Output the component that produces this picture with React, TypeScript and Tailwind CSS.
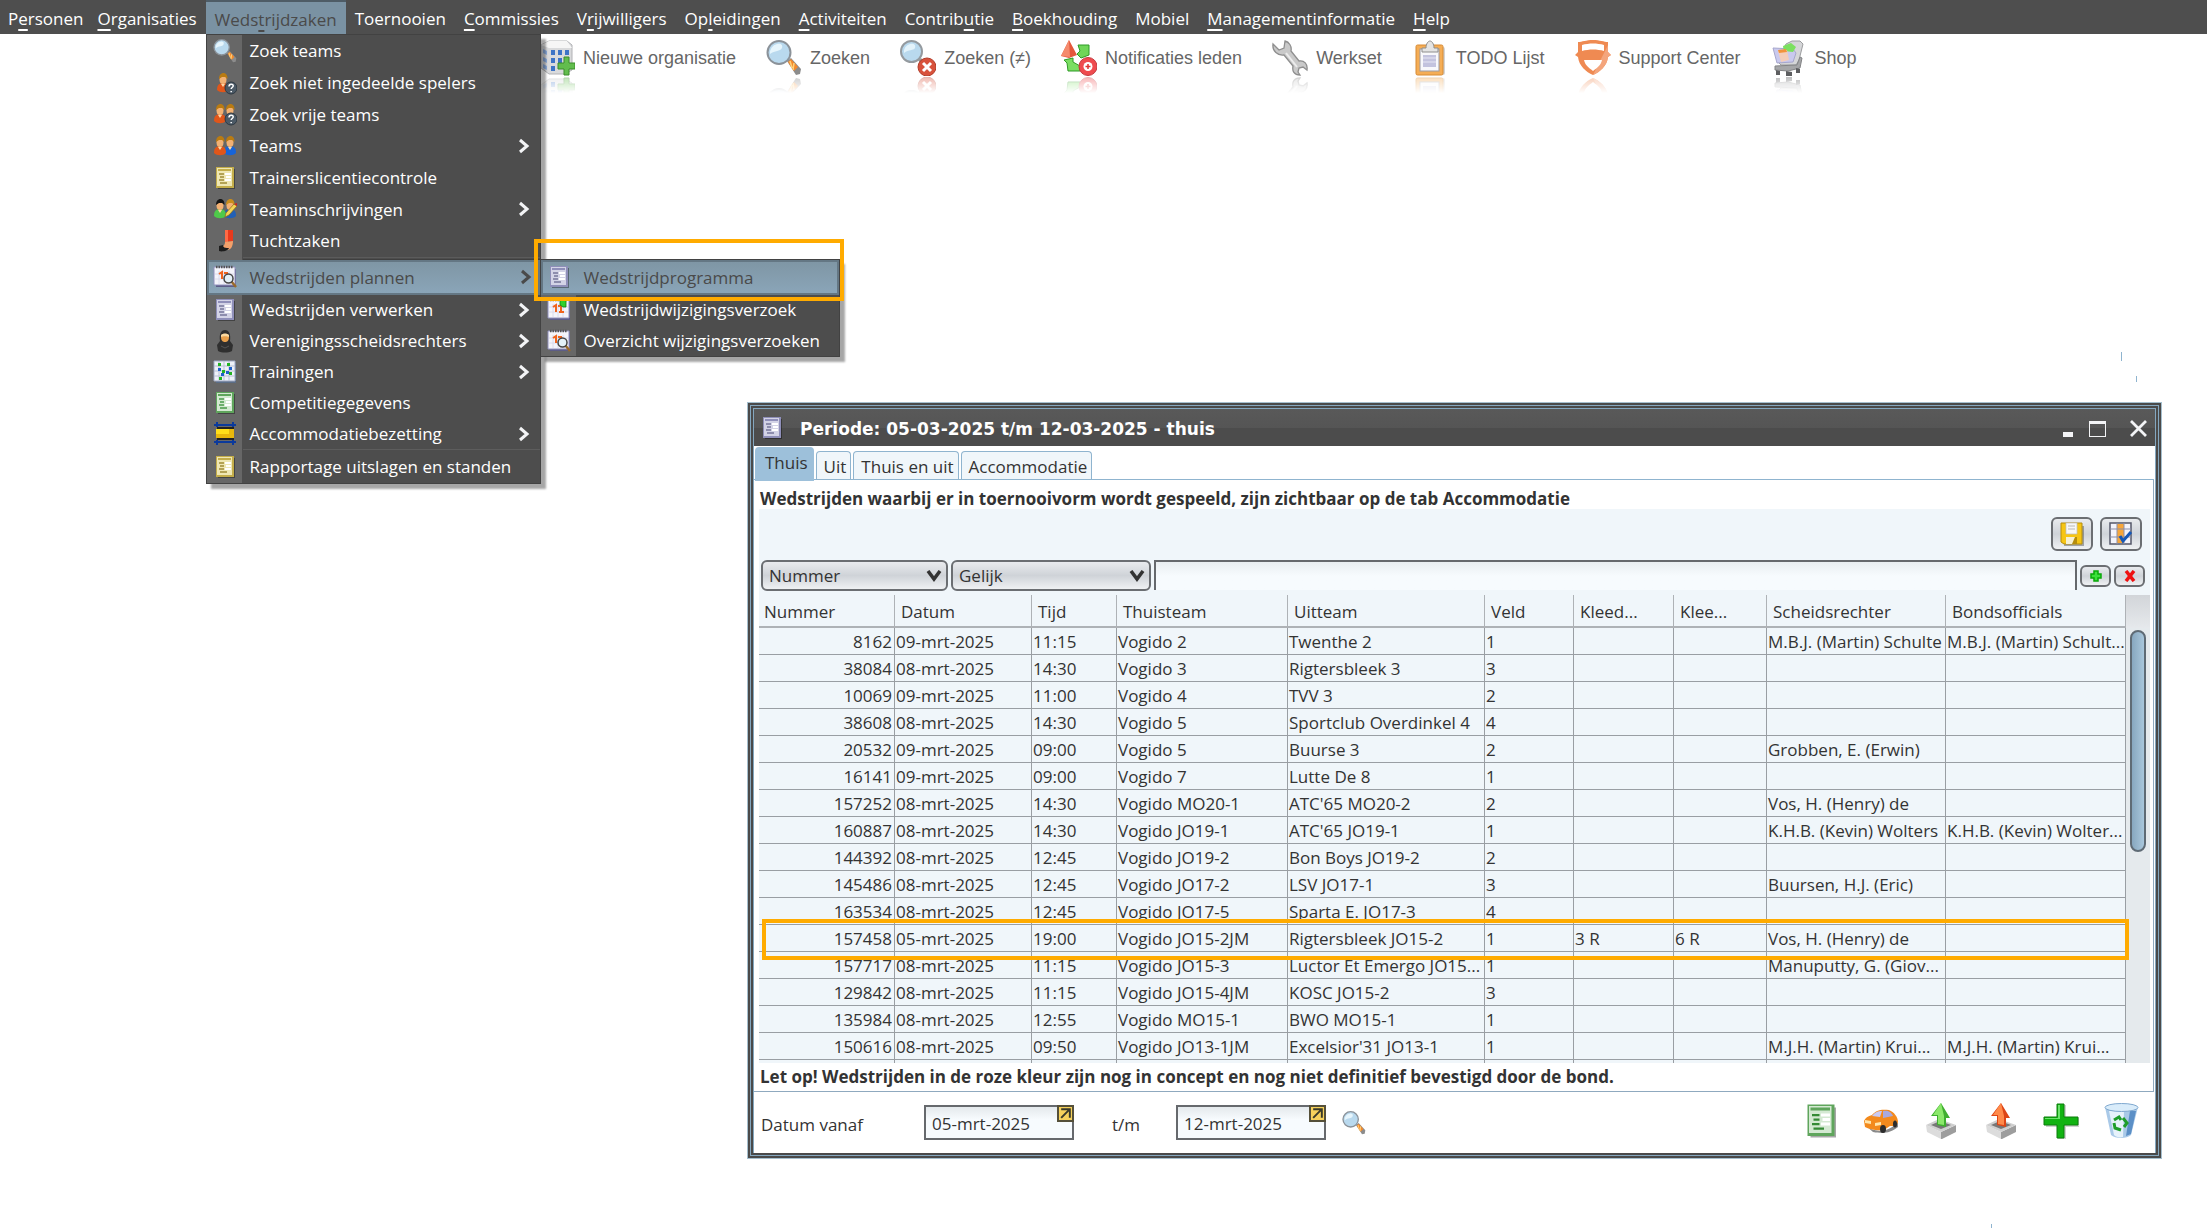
import { FC, ReactNode } from "react";

interface IconProps {
  className?: string;
}

interface MenuEntry {
  label: string;
  icon: ReactNode;
  sub?: boolean;
  active?: boolean;
}

/* ---------- icons ---------- */

const Magnifier: FC<IconProps> = ({ className = "size-6" }) => (
  <svg viewBox="0 0 36 36" className={className} aria-hidden="true">
    <path d="M21 21l4-3 10 11-1 5-4 1z" fill="#8c8c8c" />
    <path d="M22 22l3-3 7 8-4 4z" fill="#f58a2c" />
    <path d="M24 21l2 7M28 23l-1 7" stroke="#ffd27a" strokeWidth="1.5" />
    <ellipse cx="13" cy="12.500" rx="11.500" ry="11.500" fill="#b9d9ee" stroke="#8b9299" strokeWidth="2" />
    <path d="M4 14a9 9 0 0 1 7-10c4-1 6 1 5 4-2 4-7 2-12 6z" fill="#e6f5fc" />
  </svg>
);

const MagnifierCross: FC<IconProps> = ({ className = "size-9" }) => (
  <svg viewBox="0 0 36 36" className={className} aria-hidden="true">
    <path d="M18 20l3-2 5 5-4 3z" fill="#9a9a9a" />
    <circle cx="11.500" cy="11.500" r="10.500" fill="#b9d9ee" stroke="#949a9f" strokeWidth="2" />
    <path d="M4 13a8 8 0 0 1 6-9c4-1 6 1 5 4-2 3-6 1-11 5z" fill="#e3f3fb" />
    <circle cx="27" cy="27" r="9" fill="#d8523c" stroke="#b13b28" />
    <path d="M23 23l8 8M31 23l-8 8" stroke="#fff" strokeWidth="3" />
  </svg>
);

const Building: FC<IconProps> = ({ className = "size-9" }) => (
  <svg viewBox="0 0 36 36" className={className} aria-hidden="true">
    <path d="M2 5l8-4h18l5 4v25l-7 4H10l-8-6z" fill="#d9dadc" stroke="#b1b2b5" />
    <path d="M2 5l8 3h23l-5-7H10z" fill="#f6f6f6" />
    <path d="M12 10h4v5h-4zM19 10h4v5h-4zM26 10h4v5h-4zM12 18h4v5h-4zM19 18h4v5h-4zM12 26h4v5h-4zM26 18h4v4h-4z" fill="#3d74c6" />
    <path d="M4 9l4 2v4l-4-2zM4 17l4 2v4l-4-2zM4 24l4 2v4l-4-2z" fill="#8fb0e0" />
    <path d="M25 17h5v6h6v6h-6v6h-5v-6h-6v-6h6z" fill="#62bd4d" stroke="#3b8d2b" />
  </svg>
);

const Notify: FC<IconProps> = ({ className = "size-9" }) => (
  <svg viewBox="0 0 36 36" className={className} aria-hidden="true">
    <path d="M8 0l8 15-8 3-8-2z" fill="#e4573b" />
    <path d="M8 0l1 17-9-1z" fill="#f58b6d" />
    <path d="M17 5h11v10l-8 3-4-4 3-3z" fill="#6fd658" stroke="#2f9a26" />
    <path d="M3 20l9-2v4l7 4v5H7l-1-8z" fill="#7ade62" stroke="#2f9a26" />
    <circle cx="27" cy="26.500" r="9" fill="#ef4b4f" stroke="#c4373c" />
    <circle cx="27" cy="26.500" r="4.500" fill="#fff" />
    <path d="M27 24v5M24.500 26.500h5" stroke="#d33" strokeWidth="1.500" />
  </svg>
);

const Wrench: FC<IconProps> = ({ className = "size-9" }) => (
  <svg viewBox="0 0 36 36" className={className} aria-hidden="true">
    <path
      d="M1 4l6 6 5-2 1-7c4 1 7 5 6 10l8 10c5-1 9 3 8 9l-4-3-4 1-1 4 2 3c-6 0-8-4-7-9l-9-11C6 16 0 11 1 4z"
      fill="#c9c9c9"
      stroke="#8f8f8f"
      strokeWidth="1.300"
    />
    <path d="M14 13l11 14" stroke="#ececec" strokeWidth="2" />
  </svg>
);

const Clipboard: FC<IconProps> = ({ className = "size-9" }) => (
  <svg viewBox="0 0 36 36" className={className} aria-hidden="true">
    <rect x="5" y="7" width="28" height="28" rx="2" fill="#a9a9a9" opacity=".5" />
    <rect x="4" y="5" width="27" height="30" rx="1.500" fill="#f5ad55" stroke="#d68a35" />
    <rect x="8" y="9" width="19" height="22" fill="#f8f8fb" stroke="#9b9ba3" />
    <path d="M11 15h13v12H11z" fill="#c3c3de" />
    <path d="M11 18h13M11 22h13" stroke="#e6e6f4" />
    <path d="M10 12V8h4c0-4 2-7 4-7s4 3 4 7h4v4z" fill="#e4e4e4" stroke="#8e8e8e" />
  </svg>
);

const Shield: FC<IconProps> = ({ className = "size-9" }) => (
  <svg viewBox="0 0 36 36" className={className} aria-hidden="true">
    <path d="M3 2c4 0 8-2 15-2s11 2 15 2v10l3 3-3 2c-1 9-8 15-15 18C11 32 4 26 3 17l-3-2 3-3z" fill="#ef8a52" />
    <path d="M18 35c7-3 14-9 15-18l3-2-3-3V5z" fill="#f4a57c" />
    <path d="M7 5c7-2 15-2 22 0v6c-7-2-15-2-22 0z" fill="#fff" />
    <path d="M9 20h18c-1 5-5 8-9 11-4-3-8-6-9-11z" fill="#fff" />
  </svg>
);

const Cart: FC<IconProps> = ({ className = "size-9" }) => (
  <svg viewBox="0 0 36 36" className={className} aria-hidden="true">
    <path d="M15 4l6-3h8l3 3-4 16-3 5H10l-4-4z" fill="#d5d6d8" stroke="#9b9c9e" />
    <path d="M2 8l20 1 3 4-3 9-16 1z" fill="#c9c9ee" stroke="#a6a6cc" />
    <path d="M12 6l8-3 5 4-3 5-9-1z" fill="#7be05f" />
    <path d="M7 11l9-1 2 10-8 2z" fill="#f4cdb9" />
    <path d="M7 10l8-1 1 3-8 1z" fill="#f2933c" />
    <path d="M4 26l22-1 3-8 2 1-2 10-12 3-13-1z" fill="#a5a6a8" stroke="#838486" />
    <path d="M5 30l4 1v4H5zM15 31l6 1v4h-6zM25 28l4 1v4h-4z" fill="#5d5e60" />
  </svg>
);

interface SheetProps {
  frame: string;
  paper: string;
  ink: string;
  className?: string;
}

const Sheet: FC<SheetProps> = ({ frame, paper, ink, className = "size-6" }) => (
  <svg viewBox="0 0 24 24" className={className} aria-hidden="true">
    <path d="M5 3h17v20H5z" fill="#000" opacity=".35" />
    <path d="M3 1h18v21H3z" fill={frame} />
    <path d="M4 2h15v18H4z" fill={paper} />
    <path d="M5 4h13" stroke={frame} strokeWidth="2" />
    <path d="M6 8h5M7 11h4M6 14h5M7 17h7" stroke={ink} strokeWidth="1.500" />
    <path d="M12 8h6M13 11h5M12 14h6" stroke="#fff" strokeWidth="2" />
  </svg>
);

const PurpleSheet = () => <Sheet frame="#8f8fb9" paper="#d3d3e6" ink="#77779a" />;
const GreenSheet = () => <Sheet frame="#5fa55c" paper="#d4e9d2" ink="#4b9a4b" />;
const YellowSheet = () => <Sheet frame="#c3ad4a" paper="#efe7b4" ink="#a08c36" />;

interface PersonProps {
  x: number;
  body: string;
  hair: string;
}

const Person: FC<PersonProps> = ({ x, body, hair }) => (
  <g transform={`translate(${x} 0)`}>
    <path d="M0 19c0-5 2-7 6-7s6 2 6 7c-3 3-9 3-12 0z" fill={body} />
    <ellipse cx="6" cy="8.500" rx="3.500" ry="4.500" fill="#f3b173" />
    <path d="M2 8c0-8 9-8 8.500 0L8 6H5z" fill={hair} />
    <path d="M4 13l2 3 2-3z" fill="#fbd7a7" />
  </g>
);

const Question = () => (
  <g>
    <circle cx="18" cy="17" r="6" fill="#4c5a66" stroke="#2e3943" />
    <path d="M16 15.500c0-3 4.500-3 4.200-.5-.2 1.500-2 1.500-2 3M18.200 20v1.300" fill="none" stroke="#fff" strokeWidth="1.500" />
  </g>
);

const PersonQuestion = () => (
  <svg viewBox="0 0 24 24" className="size-6" aria-hidden="true">
    <Person x={4} body="#e0561a" hair="#b97b12" />
    <Question />
  </svg>
);

const PeopleQuestion = () => (
  <svg viewBox="0 0 24 24" className="size-6" aria-hidden="true">
    <Person x={11} body="#1f5fc6" hair="#b97b12" />
    <Person x={1} body="#e0561a" hair="#b97b12" />
    <Question />
  </svg>
);

const People = () => (
  <svg viewBox="0 0 24 24" className="size-6" aria-hidden="true">
    <Person x={11} body="#1764d8" hair="#b97b12" />
    <Person x={1} body="#e0561a" hair="#b97b12" />
  </svg>
);

const PeoplePencil = () => (
  <svg viewBox="0 0 24 24" className="size-6" aria-hidden="true">
    <Person x={11} body="#2360b5" hair="#c98d1c" />
    <Person x={1} body="#4fc94a" hair="#151515" />
    <path d="M12 20l1-4 8-9 3 2-8 9z" fill="#f4d455" stroke="#8a6a12" strokeWidth=".7" />
    <path d="M21 7l3 2 0-3z" fill="#c22" />
  </svg>
);

const Boot = () => (
  <svg viewBox="0 0 24 24" className="size-6" aria-hidden="true">
    <path d="M12 1h8v11l-8 1z" fill="#e8391c" />
    <path d="M12 1h3v12h-3z" fill="#ff6a45" />
    <path d="M12 13l8-1c0 5-2 9-6 9l-5-3c2-1 3-3 3-5z" fill="#f3a06a" />
    <path d="M6 17l4-1c0 3 3 3 6 3-1 3-7 4-10 3z" fill="#1d1d1d" />
  </svg>
);

const Calendar: FC<{ children?: ReactNode }> = ({ children }) => (
  <svg viewBox="0 0 24 24" className="size-6" aria-hidden="true">
    <path d="M3 4h20v18H3z" fill="#5d5d88" />
    <path d="M1 2h21v18H1z" fill="#f4f4fb" stroke="#9292bd" />
    <path d="M6 6v13M11 6v13M16 6v13M2 9h19M2 14h19" stroke="#d5d5ea" strokeWidth=".8" />
    <path d="M3 2h17" stroke="#555" strokeWidth="2.500" strokeDasharray="1.500 1" />
    <path d="M6 9l3-2v7M11 8h3v5" fill="none" stroke="#f0641e" strokeWidth="2" />
    {children}
  </svg>
);

const CalendarSearch = () => (
  <Calendar>
    <path d="M18 16l5 6" stroke="#9a6a2a" strokeWidth="2.500" />
    <circle cx="15.500" cy="13.500" r="4.500" fill="#e4f1f8" stroke="#444" strokeWidth="1.500" />
  </Calendar>
);

const CalendarChange = () => (
  <Calendar>
    <path d="M13 1h6v8h-3l-3-2z" fill="#2fd02a" stroke="#0d7e12" strokeWidth=".8" />
    <path d="M12 14h5" stroke="#f0641e" strokeWidth="2" />
  </Calendar>
);

const Referee = () => (
  <svg viewBox="0 0 24 24" className="size-6" aria-hidden="true">
    <path d="M5 22l-1-6 3-4c-1-7 1-11 5-11s6 4 5 11l3 4-1 6c-4 2-10 2-14 0z" fill="#2f2f2f" />
    <path d="M8 8c0-4 8-4 8 0s-2 5-4 5-4-1-4-5z" fill="#e9a04c" />
    <path d="M8 8c2-1 6-1 8 0V6c-2-2-6-2-8 0z" fill="#fbd9a0" />
    <path d="M8 17l4 2 4-2" stroke="#555" fill="none" />
  </svg>
);

const Training = () => (
  <svg viewBox="0 0 24 24" className="size-6" aria-hidden="true">
    <path d="M3 3h20v20H3z" fill="#5b6d86" />
    <path d="M1 1h21v20H1z" fill="#eef1f8" stroke="#9fa9c4" />
    <path d="M6 1v20M11 1v20M16 1v20M1 6h21M1 11h21M1 16h21" stroke="#b9c0d4" />
    <path d="M5 3h3v3H5zM14 3h3v3h-3zM9 10h3v3H9zM16 12h3v3h-3zM6 17h3v3H6z" fill="#23b323" />
    <path d="M5 8h3v3H5zM16 7h3v3h-3zM13 11h3v3h-3zM8 13h3v3H8z" fill="#1f62c9" />
  </svg>
);

const Pitch = () => (
  <svg viewBox="0 0 24 24" className="size-6" aria-hidden="true">
    <path d="M1 3h22M1 20h22M4 0v5M20 0v5M4 18v5M20 18v5" stroke="#0b3a9c" strokeWidth="2" />
    <path d="M4 5h17v2H4zM4 16h17v2H4z" fill="#222" />
    <path d="M3 7h18v9H3z" fill="#e8b80c" />
    <path d="M3 7h13v5H3z" fill="#ffdf1a" />
  </svg>
);

const Floppy = () => (
  <svg viewBox="0 0 24 24" className="size-6" aria-hidden="true">
    <path d="M4 4h20v20H4z" fill="#000" opacity=".3" />
    <path d="M1 1h21v21H4l-3-2z" fill="#f6c514" stroke="#b58d0c" />
    <path d="M6 1h11v11H6z" fill="#f7f7f7" stroke="#bbb" strokeWidth=".7" />
    <path d="M8 4h7M8 7h7" stroke="#b7b7b7" />
    <path d="M6 15h11v7H6z" fill="#f6f0d4" />
    <path d="M12 22l3-7h2v7z" fill="#b58d0c" />
  </svg>
);

const TableCheck = () => (
  <svg viewBox="0 0 24 24" className="size-6" aria-hidden="true">
    <path d="M1 1h21v21H1z" fill="#f3f3fb" stroke="#55586a" strokeWidth="1.500" />
    <path d="M8 2h7v19H8z" fill="#f7a63a" />
    <path d="M1 7h21M1 15h21M8 1v21M15 1v21" stroke="#8d8fa8" />
    <path d="M11 14l3 5 8-9" fill="none" stroke="#1558b8" strokeWidth="3" />
  </svg>
);

const Car = () => (
  <svg viewBox="0 0 36 36" className="size-9" aria-hidden="true">
    <path d="M2 22c8 8 24 8 33-3v5c-8 6-14 7-25 5z" fill="#8a8a8a" />
    <path d="M1 18c1-3 4-5 8-6 4-5 9-6 17-5 5 2 9 7 9 12-1 4-4 4-8 4l-6 4c-8 1-15-1-19-3z" fill="#f38a1d" />
    <path d="M9 13c3-4 6-5 10-5l-2 6z" fill="#c9c9f2" />
    <path d="M20 8c4-1 8 0 10 5l-10 2z" fill="#a9a9dd" />
    <path d="M2 17l6 1v3l-6-1zM12 20l6-1v3l-6 1z" fill="#ffe6ac" />
    <ellipse cx="20" cy="26" rx="3" ry="4" fill="#2c2c2c" />
    <ellipse cx="32" cy="21" rx="2" ry="3.500" fill="#2c2c2c" />
  </svg>
);

const BoxArrow: FC<{ light: string; dark: string }> = ({ light, dark }) => (
  <svg viewBox="0 0 36 36" className="size-9" aria-hidden="true">
    <path d="M3 22l15 7v7L4 29z" fill="#dcdcdc" />
    <path d="M18 29l15-7v7l-14 7h-1z" fill="#9d9d9d" />
    <path d="M3 22l13-6 17 6-15 7z" fill="#cfcfcf" />
    <path d="M8 22l9-4 11 4-10 4z" fill="#777" />
    <path d="M18 0l9 15h-4v9l-9-2v-9H8z" fill={dark} />
    <path d="M18 0l3 13v9l-6-1v-9h-5z" fill={light} />
  </svg>
);

const Plus: FC<IconProps> = ({ className = "size-9" }) => (
  <svg viewBox="0 0 36 36" className={className} aria-hidden="true">
    <path d="M15 2h8v13h13v9H23v13h-8V24H3v-9h12z" fill="#8a8a8a" opacity=".4" />
    <path d="M14 1h7v13h14v8H21v13h-7V22H1v-8h13z" fill="#12b312" stroke="#0a7d0a" />
    <path d="M15 2h2v14H2v-1h13z" fill="#6be46b" />
  </svg>
);

const Bin = () => (
  <svg viewBox="0 0 36 36" className="size-9" aria-hidden="true">
    <path d="M2 4l6 28c4 4 16 4 20 0l7-28z" fill="#a9c9e8" />
    <path d="M6 8l5 24c2 2 6 3 9 2l1-26z" fill="#e6f2fb" />
    <path d="M27 8l-4 25 5-2 5-23z" fill="#5b8fc6" />
    <ellipse cx="18.500" cy="4.500" rx="16.500" ry="4" fill="#d9ecfa" stroke="#7fa8cf" />
    <path d="M11 17l5-3 2 3M20 15l4 5-3 4M18 27l-6-2-1-5" fill="none" stroke="#1e9d2b" strokeWidth="3" />
  </svg>
);

const Chevron: FC<IconProps> = ({ className = "" }) => (
  <svg viewBox="0 0 12 16" className={`w-3 h-4 ${className}`} aria-hidden="true">
    <path d="M2 2l7 6-7 6" fill="none" stroke="currentColor" strokeWidth="3" />
  </svg>
);

/* ---------- data ---------- */

// label split around its access key
const MenuBarItems: string[][] = [
  ["P", "e", "rsonen"],
  ["", "O", "rganisaties"],
  ["Weds", "t", "rijdzaken"],
  ["Toernooien", "", ""],
  ["", "C", "ommissies"],
  ["V", "r", "ijwilligers"],
  ["Op", "l", "eidingen"],
  ["", "A", "ctiviteiten"],
  ["Contrib", "u", "tie"],
  ["", "B", "oekhouding"],
  ["Mobiel", "", ""],
  ["", "M", "anagementinformatie"],
  ["", "H", "elp"],
];

const MenuGroups: MenuEntry[][] = [
  [
    { label: "Zoek teams", icon: <Magnifier /> },
    { label: "Zoek niet ingedeelde spelers", icon: <PersonQuestion /> },
    { label: "Zoek vrije teams", icon: <PeopleQuestion /> },
    { label: "Teams", icon: <People />, sub: true },
    { label: "Trainerslicentiecontrole", icon: <YellowSheet /> },
    { label: "Teaminschrijvingen", icon: <PeoplePencil />, sub: true },
    { label: "Tuchtzaken", icon: <Boot /> },
  ],
  [
    { label: "Wedstrijden plannen", icon: <CalendarSearch />, sub: true, active: true },
    { label: "Wedstrijden verwerken", icon: <PurpleSheet />, sub: true },
    { label: "Verenigingsscheidsrechters", icon: <Referee />, sub: true },
    { label: "Trainingen", icon: <Training />, sub: true },
    { label: "Competitiegegevens", icon: <GreenSheet /> },
    { label: "Accommodatiebezetting", icon: <Pitch />, sub: true },
  ],
  [{ label: "Rapportage uitslagen en standen", icon: <YellowSheet /> }],
];

const SubMenu: MenuEntry[] = [
  { label: "Wedstrijdprogramma", icon: <PurpleSheet />, active: true },
  { label: "Wedstrijdwijzigingsverzoek", icon: <CalendarChange /> },
  { label: "Overzicht wijzigingsverzoeken", icon: <CalendarSearch /> },
];

const ToolBarItems = [
  { label: "Nieuwe organisatie", icon: <Building /> },
  { label: "Zoeken", icon: <Magnifier className="size-9" /> },
  { label: "Zoeken (≠)", icon: <MagnifierCross /> },
  { label: "Notificaties leden", icon: <Notify /> },
  { label: "Werkset", icon: <Wrench /> },
  { label: "TODO Lijst", icon: <Clipboard /> },
  { label: "Support Center", icon: <Shield /> },
  { label: "Shop", icon: <Cart /> },
];

const Columns = [
  { title: "Nummer", width: "w-[136px]" },
  { title: "Datum", width: "w-[137px]" },
  { title: "Tijd", width: "w-[85px]" },
  { title: "Thuisteam", width: "w-[171px]" },
  { title: "Uitteam", width: "" },
  { title: "Veld", width: "w-[89px]" },
  { title: "Kleed...", width: "w-[100px]" },
  { title: "Klee...", width: "w-[93px]" },
  { title: "Scheidsrechter", width: "w-[179px]" },
  { title: "Bondsofficials", width: "w-[180px]" },
];

const Matches: string[][] = [
  ["8162", "09-mrt-2025", "11:15", "Vogido 2", "Twenthe 2", "1", "", "", "M.B.J. (Martin) Schulte", "M.B.J. (Martin) Schult..."],
  ["38084", "08-mrt-2025", "14:30", "Vogido 3", "Rigtersbleek 3", "3", "", "", "", ""],
  ["10069", "09-mrt-2025", "11:00", "Vogido 4", "TVV 3", "2", "", "", "", ""],
  ["38608", "08-mrt-2025", "14:30", "Vogido 5", "Sportclub Overdinkel 4", "4", "", "", "", ""],
  ["20532", "09-mrt-2025", "09:00", "Vogido 5", "Buurse 3", "2", "", "", "Grobben, E. (Erwin)", ""],
  ["16141", "09-mrt-2025", "09:00", "Vogido 7", "Lutte De 8", "1", "", "", "", ""],
  ["157252", "08-mrt-2025", "14:30", "Vogido MO20-1", "ATC'65 MO20-2", "2", "", "", "Vos, H. (Henry) de", ""],
  ["160887", "08-mrt-2025", "14:30", "Vogido JO19-1", "ATC'65 JO19-1", "1", "", "", "K.H.B. (Kevin) Wolters", "K.H.B. (Kevin) Wolter..."],
  ["144392", "08-mrt-2025", "12:45", "Vogido JO19-2", "Bon Boys JO19-2", "2", "", "", "", ""],
  ["145486", "08-mrt-2025", "12:45", "Vogido JO17-2", "LSV JO17-1", "3", "", "", "Buursen, H.J. (Eric)", ""],
  ["163534", "08-mrt-2025", "12:45", "Vogido JO17-5", "Sparta E. JO17-3", "4", "", "", "", ""],
  ["157458", "05-mrt-2025", "19:00", "Vogido JO15-2JM", "Rigtersbleek JO15-2", "1", "3 R", "6 R", "Vos, H. (Henry) de", ""],
  ["157717", "08-mrt-2025", "11:15", "Vogido JO15-3", "Luctor Et Emergo JO15...", "1", "", "", "Manuputty, G. (Giov...", ""],
  ["129842", "08-mrt-2025", "11:15", "Vogido JO15-4JM", "KOSC JO15-2", "3", "", "", "", ""],
  ["135984", "08-mrt-2025", "12:55", "Vogido MO15-1", "BWO MO15-1", "1", "", "", "", ""],
  ["150616", "08-mrt-2025", "09:50", "Vogido JO13-1JM", "Excelsior'31 JO13-1", "1", "", "", "M.J.H. (Martin) Krui...", "M.J.H. (Martin) Krui..."],
];

/* ---------- menu ---------- */

const MenuRow: FC<{ item: MenuEntry }> = ({ item }) => (
  <button
    type="button"
    className={`flex flex-1 min-h-0 w-full items-center text-left whitespace-nowrap ${
      item.active
        ? "border-2 border-[#647784] bg-linear-to-b from-[#7f96a5] to-[#8aa5b8] text-[#4a4a4a]"
        : "border-x-2 border-transparent text-white"
    }`}
  >
    <span className="w-[33px] flex justify-center">{item.icon}</span>
    <span className="flex-1 pl-2">{item.label}</span>
    {item.sub && <Chevron className={item.active ? "mr-1.5" : "mr-2 text-gray-100"} />}
  </button>
);

const WedstrijdMenu: FC = () => (
  <div className="absolute left-0 top-full z-20 w-[335px] border border-[#424242] bg-[#4d4d4d] bg-[linear-gradient(to_right,#676767_35px,transparent_35px)] shadow-[5px_5px_2px_rgba(0,0,0,0.35)] text-[17px]">
    <div className="flex flex-col h-[222px]">
      {MenuGroups[0].map((item) => (
        <MenuRow key={item.label} item={item} />
      ))}
    </div>
    <div className="ml-9 h-[3px] border-y border-t-[#5b5b5b] border-b-[#3f3f3f]" />
    <div className="flex flex-col h-[189px]">
      {MenuGroups[1].map((item) => (
        <MenuRow key={item.label} item={item} />
      ))}
    </div>
    <div className="ml-9 h-[2px] border-t border-[#5d5d5d]" />
    <div className="flex flex-col h-8">
      {MenuGroups[2].map((item) => (
        <MenuRow key={item.label} item={item} />
      ))}
    </div>
    <div className="absolute left-[333px] top-[224px] w-[300px] border border-[#424242] bg-[#4d4d4d] bg-[linear-gradient(to_right,#676767_35px,transparent_35px)] shadow-[5px_5px_2px_rgba(0,0,0,0.35)]">
      <div className="flex flex-col h-[96px]">
        {SubMenu.map((item) => (
          <MenuRow key={item.label} item={item} />
        ))}
      </div>
      <div className="absolute -left-[7px] -top-[21px] w-[310px] h-[62px] border-4 border-[#ffab00] pointer-events-none" />
    </div>
  </div>
);

const MenuBar: FC = () => (
  <nav className="flex h-[34px] bg-[#4e4e4e] text-[17px] text-white">
    {MenuBarItems.map(([before, accessKey, after], i) => {
      const label = before + accessKey + after;
      const open = label === "Wedstrijdzaken";
      return (
        <div key={label} className="relative flex">
          <button
            type="button"
            className={`h-full pt-1 ${i === 0 ? "pl-2 pr-[5px]" : "px-[9px]"} ${
              open ? "bg-[#7a92a3] border-t-2 border-[#4e5c66] text-[#4a4a4a]" : ""
            }`}
          >
            {before}
            <span className="underline decoration-2 underline-offset-4">{accessKey}</span>
            {after}
          </button>
          {open && <WedstrijdMenu />}
        </div>
      );
    })}
  </nav>
);

const ToolBar: FC = () => (
  <div className="flex gap-[30px] pl-[539px] pt-1.5">
    {ToolBarItems.map((item) => (
      <button
        key={item.label}
        type="button"
        className="flex h-9 items-center gap-2 whitespace-nowrap font-['Liberation_Sans',Arial,sans-serif] text-[18px] text-[#666]"
      >
        <span className="[-webkit-box-reflect:below_1px_linear-gradient(transparent_55%,rgba(0,0,0,0.4))]">
          {item.icon}
        </span>
        {item.label}
      </button>
    ))}
  </div>
);

/* ---------- window ---------- */

const glossy =
  "rounded-md border-2 border-[#6b6e72] bg-linear-to-b from-[#e9ebee] via-[#cfd3d8] to-[#eff1f3]";

const Picker: FC<{ name: string; value: string; className: string }> = ({ name, value, className }) => (
  <div className={`relative ${className}`}>
    <select
      aria-label={name}
      defaultValue={value}
      className={`h-[31px] w-full appearance-none pl-1.5 text-[#333] ${glossy}`}
    >
      <option>{value}</option>
    </select>
    <svg viewBox="0 0 16 12" className="pointer-events-none absolute right-1.5 top-2.5 w-4 h-3" aria-hidden="true">
      <path d="M2 1l6 8 6-8" fill="none" stroke="#333" strokeWidth="3.500" />
    </svg>
  </div>
);

const DateField: FC<{ id: string; value: string }> = ({ id, value }) => (
  <div className="relative w-[150px]">
    <input
      id={id}
      defaultValue={value}
      className="h-[35px] w-full border-2 border-[#66696d] bg-linear-to-b from-[#e4e9ec] to-[#f7fbfe] to-40% pl-1.5 pt-0.5 text-[#333]"
    />
    <button
      type="button"
      aria-label="Kies datum"
      className="absolute right-0 top-0 size-[17px] border-2 border-[#55503a] bg-[#f7d25c]"
    >
      <svg viewBox="0 0 12 12" className="size-full" aria-hidden="true">
        <path d="M2 2h8v8M10 2l-8 8" fill="none" stroke="#3a3a2a" strokeWidth="1.800" />
      </svg>
    </button>
  </div>
);

const MatchTable: FC = () => (
  <div className="flex bg-[#f0f6fa]">
    <div className="relative flex-1 min-w-0">
      <table className="w-full table-fixed border-separate border-spacing-0 whitespace-nowrap">
        <thead>
          <tr className="h-[33px]">
            {Columns.map((col, i) => (
              <th
                key={col.title}
                className={`p-0 pt-0.5 border-b-2 border-r border-[#aeb2b6] text-left font-normal ${col.width} ${
                  i === 0 ? "pl-[5px]" : "pl-1.5"
                }`}
              >
                {col.title}
              </th>
            ))}
          </tr>
        </thead>
        <tbody>
          {Matches.map((match) => (
            <tr key={match[0]} className="h-[27px]">
              {match.map((cell, i) => (
                <td
                  key={Columns[i].title}
                  className={`p-0 pt-px border-b border-r border-[#999ea3] leading-[25px] ${
                    i === 0 ? "pr-0.5 text-right" : "pl-px"
                  }`}
                >
                  {cell}
                </td>
              ))}
            </tr>
          ))}
          <tr className="h-[3px]">
            {Columns.map((col) => (
              <td key={col.title} className="p-0 border-r border-[#999ea3]" />
            ))}
          </tr>
        </tbody>
      </table>
      <div className="absolute left-[3px] -right-[3px] top-[324px] h-[41px] border-4 border-[#ffab00] pointer-events-none" />
    </div>
    <div className="flex w-6 flex-col bg-[#e5eaed]">
      <div className="h-[33px] bg-linear-to-b from-[#d2d5d9] to-[#e6e9ec]" />
      <div className="mx-1 mt-0.5 h-[222px] rounded-full border-2 border-[#5f6b75] bg-linear-to-r from-[#87a7bf] to-[#a9c7dc]" />
    </div>
  </div>
);

const MatchWindow: FC = () => (
  <section className="absolute left-[748px] right-[46px] top-[403px] border-2 border-[#4a4a4a] bg-white text-[17px] text-[#333] outline-1 outline-[#a5bfce]">
    <div className="border border-[#84a7bf]">
      <div className="border-2 border-[#4a4a4a]">
        <div className="border-t border-x border-[#84a7bf]">
          <header className="flex h-[37px] items-center bg-[linear-gradient(to_bottom,#595959,#555555_50%,#4c4c4c_50%)] pl-1.5 pr-2 text-white">
            <PurpleSheet />
            <h1 className="flex-1 pl-4 pt-1 font-['DejaVu_Sans',sans-serif] text-[17px] font-bold">
              Periode: 05-03-2025 t/m 12-03-2025 - thuis
            </h1>
            <div className="flex items-end gap-4 pt-0.5">
              <button type="button" aria-label="Minimaliseren" className="h-[5px] w-2.5 bg-gray-100" />
              <button type="button" aria-label="Maximaliseren" className="h-4 w-[17px] border border-t-[3px] border-gray-100" />
              <button type="button" aria-label="Sluiten" className="ml-2">
                <svg viewBox="0 0 17 17" className="size-[17px]" aria-hidden="true">
                  <path d="M1 1l15 15M16 1L1 16" stroke="#f3f4f6" strokeWidth="2.800" />
                </svg>
              </button>
            </div>
          </header>

          <div role="tablist" className="flex h-[34px] items-end gap-[2px] border-b border-[#8fb4cf] mr-px">
            <button
              type="button"
              role="tab"
              aria-selected="true"
              className="relative top-[2px] ml-px h-[34px] rounded-t-sm bg-[#9dc0da] pl-2.5 pr-1.5 pb-0.5"
            >
              Thuis
            </button>
            {["Uit", "Thuis en uit", "Accommodatie"].map((tab) => (
              <button
                key={tab}
                type="button"
                role="tab"
                aria-selected="false"
                className="h-7 rounded-t-sm border border-b-0 border-[#8fb4cf] bg-[#f0f6fa] pl-[7px] pr-1 pt-0.5"
              >
                {tab}
              </button>
            ))}
          </div>

          <div className="mr-px border-r border-b border-[#8fa9bf] pl-[5px] pr-[3px]">
            <p className="h-[29px] pl-px pt-[7px] font-bold leading-6">
              Wedstrijden waarbij er in toernooivorm wordt gespeeld, zijn zichtbaar op de tab Accommodatie
            </p>
            <div className="flex h-[51px] justify-end gap-[7px] bg-[#f0f6fa] pr-2 pt-2">
              <button type="button" aria-label="Opslaan" className={`flex h-[34px] w-[42px] items-center justify-center ${glossy}`}>
                <Floppy />
              </button>
              <button type="button" aria-label="Kolommen" className={`flex h-[34px] w-[42px] items-center justify-center ${glossy}`}>
                <TableCheck />
              </button>
            </div>
            <div className="flex h-[35px] gap-[3px] bg-[#f0f6fa] pl-0.5 pr-[5px]">
              <Picker name="Veld" value="Nummer" className="w-[187px]" />
              <Picker name="Vergelijking" value="Gelijk" className="w-[200px]" />
              <input
                aria-label="Zoekwaarde"
                className="h-[30px] min-w-0 flex-1 border-x-2 border-t-2 border-[#66696d] bg-linear-to-b from-[#e9eef1] to-[#f7fbfe] to-50% px-2"
              />
              <button type="button" aria-label="Toevoegen" className={`mt-[5px] flex h-[22px] w-[31px] items-center justify-center ${glossy}`}>
                <svg viewBox="0 0 12 12" className="size-3" aria-hidden="true">
                  <path d="M4 1h4v3h3v4H8v3H4V8H1V4h3z" fill="#3be03b" stroke="#08a808" strokeWidth="1.500" />
                </svg>
              </button>
              <button type="button" aria-label="Verwijderen" className={`mt-[5px] flex h-[22px] w-[31px] items-center justify-center ${glossy}`}>
                <svg viewBox="0 0 12 12" className="size-3" aria-hidden="true">
                  <path d="M2 1l8 10M10 1L2 11" stroke="#ee1111" strokeWidth="3.500" />
                </svg>
              </button>
            </div>
            <MatchTable />
            <p className="h-7 pl-px font-bold leading-7">
              Let op! Wedstrijden in de roze kleur zijn nog in concept en nog niet definitief bevestigd door de bond.
            </p>
          </div>

          <footer className="flex h-[61px] items-center pl-[7px] pr-4">
            <label htmlFor="van" className="w-[163px] pt-1">
              Datum vanaf
            </label>
            <DateField id="van" value="05-mrt-2025" />
            <label htmlFor="tot" className="w-[102px] pl-[38px] pt-1">
              t/m
            </label>
            <DateField id="tot" value="12-mrt-2025" />
            <button type="button" aria-label="Zoeken" className="ml-4">
              <Magnifier />
            </button>
            <div className="mb-1 ml-auto flex gap-6">
              <button type="button" aria-label="Lijst">
                <Sheet frame="#5fa55c" paper="#d4e9d2" ink="#358a35" className="size-9" />
              </button>
              <button type="button" aria-label="Vervoer">
                <Car />
              </button>
              <button type="button" aria-label="Importeren">
                <BoxArrow light="#8be86a" dark="#3fae2f" />
              </button>
              <button type="button" aria-label="Exporteren">
                <BoxArrow light="#ff8a4a" dark="#dd4516" />
              </button>
              <button type="button" aria-label="Nieuw">
                <Plus />
              </button>
              <button type="button" aria-label="Prullenbak">
                <Bin />
              </button>
            </div>
          </footer>
        </div>
      </div>
    </div>
  </section>
);

const App: FC = () => (
  <main className="relative min-h-screen bg-white font-['Open_Sans','Noto_Sans',sans-serif]">
    <MenuBar />
    <ToolBar />
    <span className="absolute right-[85px] top-[352px] h-[9px] w-px bg-[#8fb4cf]" />
    <span className="absolute right-[70px] top-[376px] h-1.5 w-px bg-[#8fb4cf]" />
    <span className="absolute right-[215px] bottom-0 h-1 w-px bg-[#8fb4cf]" />
    <MatchWindow />
  </main>
);

export default App;
